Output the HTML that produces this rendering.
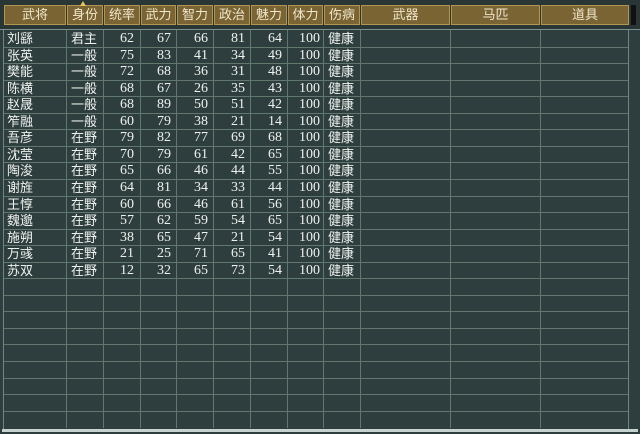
<!DOCTYPE html>
<html><head><meta charset="utf-8"><style>
body{margin:0;width:640px;height:434px;background:#2e3d3d;overflow:hidden;font-family:"Liberation Sans","Noto Sans CJK SC",sans-serif;position:relative}
.top{position:absolute;left:0;top:0;width:640px;height:29px;background:#2a3636;border-bottom:1px solid #7d8f8c}
.h{position:absolute;top:5px;height:18px;background:#7b6433;border:1px solid #b09650;color:#efe6cc;font-size:13px;line-height:18px;text-align:center;white-space:nowrap}
.vl{position:absolute;top:30px;height:398px;width:1px;background:#62786f}
.hl{position:absolute;left:4px;width:624px;height:1px;background:#62786f}
.r{position:absolute;left:0;width:640px;height:17px;font-size:13px;line-height:17px;color:#eef2ee;white-space:nowrap}
.r span{position:absolute;top:0;white-space:nowrap}
.n{text-align:right;font-family:"Liberation Serif",serif;font-size:14px}
</style></head><body>
<div class="top"></div>
<div class="h" style="left:4px;width:60px">武将</div>
<div class="h" style="left:67px;width:34px">身份</div>
<div class="h" style="left:104px;width:34px">统率</div>
<div class="h" style="left:141px;width:33px">武力</div>
<div class="h" style="left:177px;width:34px">智力</div>
<div class="h" style="left:214px;width:34px">政治</div>
<div class="h" style="left:251px;width:34px">魅力</div>
<div class="h" style="left:288px;width:33px">体力</div>
<div class="h" style="left:324px;width:34px">伤病</div>
<div class="h" style="left:361px;width:87px">武器</div>
<div class="h" style="left:451px;width:87px">马匹</div>
<div class="h" style="left:541px;width:86px">道具</div>
<div style="position:absolute;left:631px;top:5px;width:5px;height:20px;background:#111"></div>
<div style="position:absolute;left:80px;top:1px;width:0;height:0;border-left:3px solid transparent;border-right:3px solid transparent;border-bottom:5px solid #e8c060"></div>
<div style="position:absolute;left:3px;top:30px;width:1px;height:400px;background:#6f8581"></div>
<div style="position:absolute;left:628px;top:30px;width:1px;height:400px;background:#6f8581"></div>
<div style="position:absolute;left:2px;top:429px;width:636px;height:3px;background:#c5d2ce"></div>
<div id="g"></div>
<div id="rows"></div>
<script>
var xs=[66,103,140,176,213,250,287,323,360,450,540];
var g='';xs.forEach(function(x){g+='<div class="vl" style="left:'+x+'px"></div>'});
for(var i=1;i<24;i++){g+='<div class="hl" style="top:'+Math.round(30+i*16.55)+'px"></div>'}
document.getElementById('g').innerHTML=g;
var d=[["刘繇","君主",62,67,66,81,64],["张英","一般",75,83,41,34,49],["樊能","一般",72,68,36,31,48],["陈横","一般",68,67,26,35,43],["赵晟","一般",68,89,50,51,42],["笮融","一般",60,79,38,21,14],["吾彦","在野",79,82,77,69,68],["沈莹","在野",70,79,61,42,65],["陶浚","在野",65,66,46,44,55],["谢旌","在野",64,81,34,33,44],["王惇","在野",60,66,46,61,56],["魏邈","在野",57,62,59,54,65],["施朔","在野",38,65,47,21,54],["万彧","在野",21,25,71,65,41],["苏双","在野",12,32,65,73,54]];
var h='';var rx=[134,171,208,245,282];
d.forEach(function(r,i){var t=Math.round(30+i*16.55);
h+='<div class="r" style="top:'+t+'px"><span style="left:7px">'+r[0]+'</span><span style="left:71px">'+r[1]+'</span>';
for(var k=0;k<5;k++)h+='<span class="n" style="left:'+(rx[k]-30)+'px;width:30px">'+r[k+2]+'</span>';
h+='<span class="n" style="left:288px;width:32px">100</span><span style="left:328px">健康</span></div>';});
document.getElementById('rows').innerHTML=h;
</script>
</body></html>
